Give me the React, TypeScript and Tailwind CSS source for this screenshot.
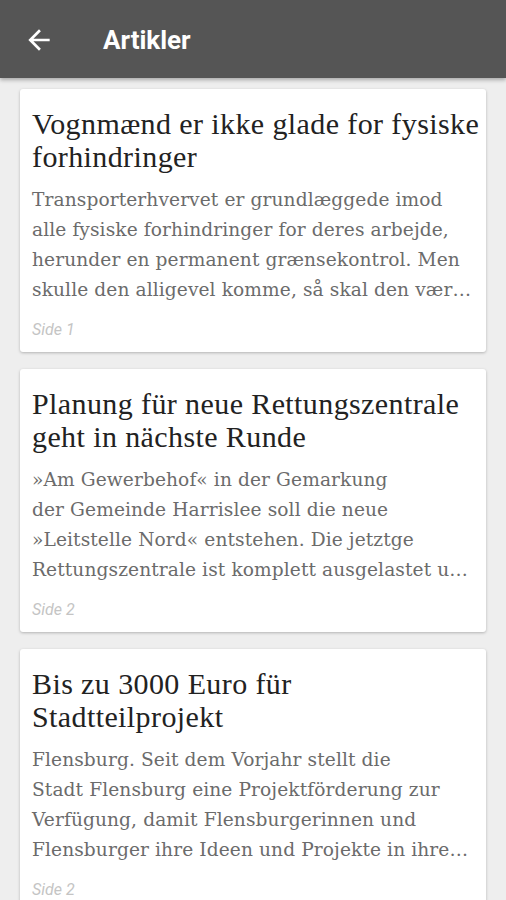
import React from "react";

type Article = { title: string[]; body: string[]; page: string };

const articles: Article[] = [
  {
    title: ["Vognmænd er ikke glade for fysiske", "forhindringer"],
    body: [
      "Transporterhvervet er grundlæggede imod",
      "alle fysiske forhindringer for deres arbejde,",
      "herunder en permanent grænsekontrol. Men",
      "skulle den alligevel komme, så skal den vær…",
    ],
    page: "Side 1",
  },
  {
    title: ["Planung für neue Rettungszentrale", "geht in nächste Runde"],
    body: [
      "»Am Gewerbehof« in der Gemarkung",
      "der Gemeinde Harrislee soll die neue",
      "»Leitstelle Nord« entstehen. Die jetztge",
      "Rettungszentrale ist komplett ausgelastet u…",
    ],
    page: "Side 2",
  },
  {
    title: ["Bis zu 3000 Euro für", "Stadtteilprojekt"],
    body: [
      "Flensburg. Seit dem Vorjahr stellt die",
      "Stadt Flensburg eine Projektförderung zur",
      "Verfügung, damit Flensburgerinnen und",
      "Flensburger ihre Ideen und Projekte in ihre…",
    ],
    page: "Side 2",
  },
];

export default function App() {
  return (
    <div className="w-[506px] h-[900px] overflow-hidden bg-[#eeeeee]">
      <header className="relative z-10 h-[78px] bg-[#555555] flex items-center shadow-[0_2px_4px_rgba(0,0,0,0.3)]">
        <div className="w-[103px] flex items-center pl-[23px] pt-[2px]">
          <svg width="32" height="32" viewBox="0 0 24 24" fill="white">
            <path d="M20 11H7.83l5.59-5.59L12 4l-8 8 8 8 1.41-1.41L7.83 13H20v-2z" />
          </svg>
        </div>
        <span className="text-white text-[26px] font-bold font-['Roboto',sans-serif] leading-none pt-[2px]">
          Artikler
        </span>
      </header>
      <main className="flex flex-col gap-[17px] px-[20px] pt-[11px]">
        {articles.map((a, i) => (
          <div
            key={i}
            className="bg-white rounded-[3px] shadow-[0_1px_3px_rgba(0,0,0,0.25)] pt-[18px] pb-[12px] px-[12px] h-[263px] shrink-0"
          >
            <div className="font-['Liberation_Serif',serif] text-[30px] tracking-[0.4px] leading-[33px] text-[#222222]">
              {a.title.map((t, j) => (
                <div key={j} className="whitespace-nowrap">
                  {t}
                </div>
              ))}
            </div>
            <div className="mt-[12px] font-['DejaVu_Serif',serif] text-[18.6px] tracking-[0.1px] leading-[30px] text-[#6b6b6b]">
              {a.body.map((t, j) => (
                <div key={j} className="whitespace-nowrap">
                  {t}
                </div>
              ))}
            </div>
            <div className="mt-[15px] font-['Roboto',sans-serif] italic text-[16px] leading-[20px] text-[#c4c4c4]">
              {a.page}
            </div>
          </div>
        ))}
      </main>
    </div>
  );
}
